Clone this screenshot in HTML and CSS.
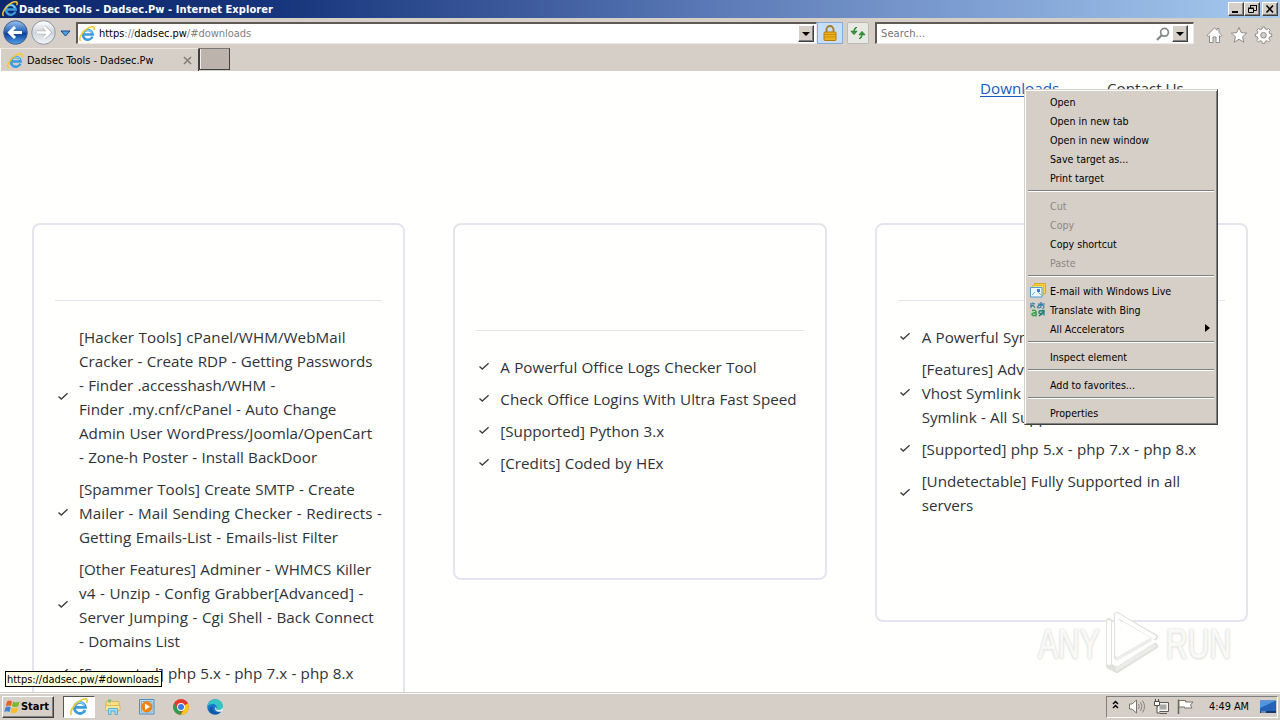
FILE: index.html
```html
<!DOCTYPE html>
<html lang="en">
<head>
<meta charset="utf-8">
<title>Dadsec Tools - Dadsec.Pw</title>
<link rel="stylesheet" href="styles.css">
</head>
<body>
<svg width="0" height="0" class="defs">
  <defs>
    <linearGradient id="blueball" x1="0" y1="0" x2="0" y2="1"><stop offset="0" stop-color="#9cc4ee"/><stop offset=".45" stop-color="#2b66bb"/><stop offset=".55" stop-color="#0f3f97"/><stop offset="1" stop-color="#4fa6ee"/></linearGradient>
    <linearGradient id="greyball" x1="0" y1="0" x2="0" y2="1"><stop offset="0" stop-color="#fff"/><stop offset=".5" stop-color="#cfd4dc"/><stop offset="1" stop-color="#f4f7fb"/></linearGradient>
    <symbol id="ie" viewBox="0 0 16 16">
      <path d="M13.400 10.600A4.900 4.900 0 1 1 13.700 8.400H5.200" fill="none" stroke="#3a9bdf" stroke-width="2.500"/>
      <path d="M13 7A5 5 0 0 0 3.600 7.500" fill="none" stroke="#8ad6fa" stroke-width="1.100"/>
      <path d="M1.600 15C-.8 13 2.500 6.500 7.500 3.200C11.500.400 15 .200 15.200 1.900C15.300 2.700 15 3.500 14.600 4.200" fill="none" stroke="#f2c933" stroke-width="1.500"/>
    </symbol>
    <symbol id="check" viewBox="0 0 12 12"><path d="M1.500 6.500L4.300 9.100L10.600 3.300" fill="none" stroke="#3c3f45" stroke-width="1.400"/></symbol>
  </defs>
</svg>
<div class="screen">
  <header class="titlebar">
    <svg class="i16"><use href="#ie"/></svg>
    <span class="title">Dadsec Tools - Dadsec.Pw - Internet Explorer</span>
    <div class="winbtns">
      <button class="wb"><svg width="12" height="10"><path d="M2 8h6" stroke="#000" stroke-width="2"/></svg></button><button class="wb"><svg width="12" height="10"><path d="M4.500 4V1.500H10.500V6.500H8M4 1.500h7M2.500 4.500h5v4h-5zM2 4h6" fill="none" stroke="#000"/></svg></button><button class="wb close"><svg width="12" height="10"><path d="M2.500 1.500L9 8.500M9 1.500L2.500 8.500" stroke="#000" stroke-width="1.600"/></svg></button>
    </div>
  </header>
  <div class="toolbar">
    <svg class="nav" width="74" height="28" viewBox="0 0 74 28">
      <circle cx="15.500" cy="13.500" r="11.800" fill="url(#blueball)" stroke="#455f8d"/>
      <path d="M22 13.500H10M15 8L9.500 13.500L15 19" fill="none" stroke="#fff" stroke-width="3"/>
      <circle cx="43.500" cy="13.500" r="11.800" fill="url(#greyball)" stroke="#9297a0"/>
      <path d="M37 13.500H49M44 8L49.500 13.500L44 19" fill="none" stroke="#b3b7bf" stroke-width="4.200"/>
      <path d="M37 13.500H49M44 8L49.500 13.500L44 19" fill="none" stroke="#fff" stroke-width="2.600"/>
      <path d="M61 12h9l-4.500 5z" fill="#4c9fe0" stroke="#174b86"/>
    </svg>
    <div class="field address">
      <svg class="i16"><use href="#ie"/></svg>
      <span class="url">https<i>://</i>dadsec.pw<i>/#downloads</i></span>
      <span class="drop"></span>
    </div>
    <div class="tool lock"><svg width="14" height="16" viewBox="0 0 14 16"><path d="M3.500 8V4.500a3.500 3.500 0 0 1 7 0V8" fill="none" stroke="#a57c20" stroke-width="1.800"/><rect x="1" y="7" width="12" height="8.500" rx="1" fill="#eeb01e" stroke="#b17a0b"/><path d="M1.500 9.500h11M1.500 12h11" stroke="#c88c0e"/></svg></div>
    <div class="tool refresh"><svg width="16" height="14" viewBox="0 0 16 14"><path d="M7 1.500C5 1 4 2.500 4 5.500M1 5.200h6l-3 3.300zM9 12.500C11 13 12 11.500 12 8.500M9 8.800h6l-3-3.300z" fill="#369c38" stroke="#27852d"/></svg></div>
    <div class="field search">
      <span class="ph">Search...</span>
      <svg class="mag" width="14" height="14" viewBox="0 0 14 14"><circle cx="8.500" cy="5.300" r="3.900" fill="none" stroke="#85878a" stroke-width="1.700"/><path d="M5.600 8.300L1 13" stroke="#85878a" stroke-width="2.200"/></svg>
      <span class="drop"></span>
    </div>
    <svg class="cmds" width="68" height="18" viewBox="0 0 68 18" fill="#fff" stroke="#8e8b87">
      <path d="M1 9.500L8.500 1.800L11 4.300V2.500h2v4L16 9.500L14.500 10.500L13.500 9.700V16.500H10V11H7V16.500H3.500V9.700L2.400 10.500Z"/>
      <path d="M33 1.500L35.200 6.600L40.700 7.100L36.600 10.700L37.800 16.200L33 13.300L28.200 16.200L29.400 10.700L25.300 7.100L30.800 6.600Z"/>
      <path d="M56.300 1h2.400l.4 2 1.700.7 1.700-1.200 1.700 1.700-1.200 1.700.7 1.700 2 .4v2.400l-2 .4-.7 1.700 1.200 1.700-1.700 1.700-1.700-1.200-1.700.7-.4 2h-2.400l-.4-2-1.700-.7-1.700 1.200-1.700-1.700 1.200-1.700-.7-1.700-2-.4V8l2-.4.7-1.700-1.200-1.700 1.700-1.700 1.700 1.200 1.700-.7Z"/><circle cx="57.500" cy="9.200" r="2.800" fill="#d6cfc8"/>
    </svg>
  </div>
  <div class="tabs">
    <div class="tab"><svg class="i16"><use href="#ie"/></svg><span>Dadsec Tools - Dadsec.Pw</span><svg class="x" width="9" height="9"><path d="M1 1L8 8M8 1L1 8" stroke="#858078" stroke-width="1.700"/></svg></div>
    <div class="newtab"></div>
  </div>

  <main class="page">
    <nav class="links"><a class="on">Downloads</a><a>Contact Us</a></nav>
    <section class="cards">
      <article class="card c1">
        <hr>
        <ul>
          <li><svg><use href="#check"/></svg><p><span class="wide">[Hacker Tools] cPanel/WHM/WebMail</span><span>Cracker - Create RDP - Getting Passwords</span><span>- Finder .accesshash/WHM -</span><span>Finder .my.cnf/cPanel - Auto Change</span><span>Admin User WordPress/Joomla/OpenCart</span><span>- Zone-h Poster - Install BackDoor</span></p></li>
          <li><svg><use href="#check"/></svg><p><span>[Spammer Tools] Create SMTP - Create</span><span class="wide">Mailer - Mail Sending Checker - Redirects -</span><span class="wide">Getting Emails-List - Emails-list Filter</span></p></li>
          <li><svg><use href="#check"/></svg><p><span>[Other Features] Adminer - WHMCS Killer</span><span class="wide">v4 - Unzip - Config Grabber[Advanced] -</span><span class="wide">Server Jumping - Cgi Shell - Back Connect</span><span>- Domains List</span></p></li>
          <li><svg><use href="#check"/></svg><p><span>[Supported] php 5.x - php 7.x - php 8.x</span></p></li>
        </ul>
      </article>
      <article class="card c2">
        <hr>
        <ul>
          <li><svg><use href="#check"/></svg><p><span>A Powerful Office Logs Checker Tool</span></p></li>
          <li><svg><use href="#check"/></svg><p><span>Check Office Logins With Ultra Fast Speed</span></p></li>
          <li><svg><use href="#check"/></svg><p><span>[Supported] Python 3.x</span></p></li>
          <li><svg><use href="#check"/></svg><p><span>[Credits] Coded by HEx</span></p></li>
        </ul>
      </article>
      <article class="card c3">
        <hr>
        <ul>
          <li><svg><use href="#check"/></svg><p><span>A Powerful Sym</span></p></li>
          <li><svg><use href="#check"/></svg><p><span>[Features] Adva</span><span>Vhost Symlink</span><span>Symlink - All Supp</span></p></li>
          <li><svg><use href="#check"/></svg><p><span>[Supported] php 5.x - php 7.x - php 8.x</span></p></li>
          <li><svg><use href="#check"/></svg><p><span>[Undetectable] Fully Supported in all</span><span>servers</span></p></li>
        </ul>
      </article>
    </section>
    <div class="watermark">
      <span class="any">ANY</span>
      <svg width="58" height="66" viewBox="0 0 58 66" fill="none">
        <g stroke="#e0e0dd" stroke-width="6" stroke-linejoin="round" stroke-linecap="round"><path d="M14 6V48L45 30M14 6L52 28M6 12V57L14 61L52 37"/></g>
        <path d="M14 10L48 29L14 49Z" fill="#fffffd"/>
        <g stroke="#fff" stroke-width="4" stroke-linejoin="round" stroke-linecap="round"><path d="M14 6V46M14 6L51 28M6 13V54"/></g>
        <g stroke="#ececea" stroke-width="3.500" stroke-linecap="round"><path d="M14 50L47 31M14 60L51 37"/></g>
      </svg>
      <span class="run">RUN</span>
    </div>
    <div class="tooltip">https://dadsec.pw/#downloads</div>
  </main>

  <footer class="taskbar">
    <button class="start"><svg width="17" height="16" viewBox="0 0 17 16"><path d="M3 2.500Q5.500.800 8 2.400L6.900 7Q4.500 5.700 1.800 7.200Z" fill="#e8602c"/><path d="M9 2.800Q12 4.300 15.500 2.500L14.300 7.200Q11 8.800 7.900 7.200Z" fill="#79b72c"/><path d="M1.600 8.200Q4.200 6.800 6.700 8.200L5.500 13Q3 11.500.300 13Z" fill="#3b83d6"/><path d="M7.700 8.500Q11 10 14.100 8.400L12.800 13.300Q9.600 15 6.500 13.300Z" fill="#f5c027"/></svg><b>Start</b></button>
    <div class="pin active"><svg class="i18"><use href="#ie"/></svg></div>
    <div class="pin"><svg width="18" height="18" viewBox="0 0 18 18"><path d="M2 3.500L7 2L8 3.500H15V9H2z" fill="#f7df86" stroke="#ddb64e"/><path d="M4 1.500h3v3H4z" fill="#7bc37a"/><path d="M1.500 7.500H16v5H1.500z" fill="#f8e69b" stroke="#dcba5d"/><path d="M4.500 16.500V10.500H13.500V16.500H11V13H7V16.500Z" fill="#a7dcf2" stroke="#5caed3"/></svg></div>
    <div class="pin"><svg width="18" height="18" viewBox="0 0 18 18"><path d="M1.500 1.500h14.500v14.500h-14.500z" fill="#b6daf1" stroke="#4c8fbf"/><path d="M3.500 3.500h10.500v10.500h-10.500z" fill="#e3f0f8" stroke="#7eb2d4"/><circle cx="8.800" cy="8.800" r="5.600" fill="#ef8312"/><path d="M7 5.600L12 8.800L7 12z" fill="#fff"/></svg></div>
    <div class="pin"><svg width="16" height="16" viewBox="0 0 16 16"><circle cx="8" cy="8" r="7.800" fill="#e33b2e"/><path d="M1.200 4.200L8 8L7.700 15.800A7.800 7.800 0 0 1 1.200 4.200" fill="#2f9e4f"/><path d="M8 8L15 4.500A7.800 7.800 0 0 1 7.700 15.800L11 10Z" fill="#fbc916"/><path d="M1.200 4.200A7.800 7.800 0 0 1 15 4.500H8L4.700 10Z" fill="#e33b2e"/><circle cx="8" cy="8" r="3.900" fill="#fff"/><circle cx="8" cy="8" r="3" fill="#3b7de8"/></svg></div>
    <div class="pin"><svg width="16" height="16" viewBox="0 0 16 16"><circle cx="8" cy="8" r="7.800" fill="#1c76c9"/><path d="M.300 7.500C1 2.500 5 .200 8.500.200C13 .200 15.800 3.500 15.800 7C15.800 9.600 14 11 11.500 11C9.500 11 8.800 10.200 9.400 9.300C10.500 7.500 9 5 6 5C3.500 5 1.200 6 .300 7.500" fill="#35c5c2"/><path d="M5.800 7.500C4.500 11 8 14.500 13.500 12.700C11 16 5 16.300 2.500 12.500C1.400 9.500 4 7.500 5.800 7.500" fill="#1257a7"/><path d="M9.400 9.300C8.800 10.200 9.500 11 11.500 11C13.500 11 15.200 10 15.700 8L16 12.300L13.500 12.700C10 13.500 7.500 11 8.200 8Z" fill="#e6edf0"/></svg></div>
    <div class="tray">
      <svg width="90" height="20" viewBox="0 0 90 20" fill="none">
        <path d="M6 7L8.500 4.500L11 7M6 11L8.500 8.500L11 11" stroke="#000" stroke-width="1.500"/>
        <path d="M22.500 7H25L29.500 3V16L25 12H22.500Z" fill="#fff" stroke="#77736d"/><path d="M31.500 7q1.500 2.500 0 5M33.500 5q3 4.500 0 9M35.500 3.500q4 6 0 12" stroke="#85817b"/>
        <path d="M50.500 5.500h11v9h-11zM53 16.500h7" fill="#f4f4f2" stroke="#5d5b58"/><path d="M52.500 7.500h7v5h-7z" fill="#aaa9a6"/><path d="M47.500 4.500h5v4h-5zM48.500 2v2M51.500 2v2M50 9v7h3" stroke="#504e4b" fill="#fff"/>
        <path d="M71.500 2.500V17" stroke="#66635e" stroke-width="1.500"/><path d="M72 3.500H78.500V5H86L83.500 8L85 11H77.500V10H72Z" fill="#fff" stroke="#77736d"/>
      </svg>
      <span class="clock">4:49 AM</span>
      <svg width="18" height="16" viewBox="0 0 18 16"><path d="M1 1.500H17V12H1z" fill="#2563b8"/><path d="M1 1.500H17L1 9z" fill="#5595dc"/><path d="M1 12H17V14H1z" fill="#17386e"/><path d="M2 13h5" stroke="#c8d9ef"/></svg>
    </div>
  </footer>

  <div class="menu">
    <div>Open</div><div>Open in new tab</div><div>Open in new window</div><div>Save target as...</div><div>Print target</div>
    <hr>
    <div class="off">Cut</div><div class="off">Copy</div><div>Copy shortcut</div><div class="off">Paste</div>
    <hr>
    <div><svg class="mi" viewBox="0 0 16 16"><path d="M4.500 1.500h11v10h-11z" fill="#f8d34b" stroke="#d9a81d"/><path d="M2.500 3.500h11v10h-11z" fill="#f9e27c" stroke="#e5b733"/><path d="M.500 5.500h11.500v9.500H.500z" fill="#eaf5fd" stroke="#4e9bd5"/><path d="M2 13l3-3M11 13L8 10" stroke="#6daee0"/><path d="M7 7h3v3H7z" fill="#3d7fd0"/></svg>E-mail with Windows Live</div>
    <div><svg class="mi" viewBox="0 0 16 16" fill="none"><path d="M1 2v4l2-2 2 3M2 2l3 1M8 3h7M11 1v5q-3 2-3.500 0q1-2.500 5-2q3 1.500 0 4" stroke="#337fa5" stroke-width="1.200"/><path d="M2 9.500q4-1 4 1.500v4.500M6 12q-4-.500-4 1.500q1 2.500 4 0" stroke="#36a34b" stroke-width="1.600"/><path d="M9 10l5-.500v5M9 10v2l3 1-3 2M14 10L9 15" stroke="#1d8077" stroke-width="1.300"/></svg>Translate with Bing</div>
    <div>All Accelerators<svg class="arr" width="5" height="8"><path d="M0 0L5 4L0 8z"/></svg></div>
    <hr>
    <div>Inspect element</div>
    <hr>
    <div>Add to favorites...</div>
    <hr>
    <div>Properties</div>
  </div>
</div>
</body>
</html>
```
FILE: styles.css
```css
* { box-sizing: border-box; }
body { margin: 0; font-family: "DejaVu Sans Condensed", "DejaVu Sans", sans-serif; font-stretch: condensed; font-size: 10.6px; color: #000; }
svg { display: block; flex: none; }
.defs { position: absolute; }
.screen { width: 1280px; height: 720px; display: flex; flex-direction: column; position: relative; overflow: hidden; background: #d6cfc8; }
.i16 { width: 16px; height: 16px; }
.i18 { width: 18px; height: 18px; }
button { font: inherit; padding: 0; border-radius: 0; }

.titlebar { height: 18px; display: flex; align-items: center; padding: 0 2px; background: linear-gradient(90deg, #0c276d 0%, #17357c 22%, #6382bd 60%, #a6caf0 100%); color: #fff; }
.title { font-weight: bold; font-size: 11px; margin-left: 1px; white-space: nowrap; letter-spacing: .08px; }
.winbtns { margin-left: auto; display: flex; }
.wb { width: 16px; height: 14px; background: #d6cfc8; border: 1px solid; border-color: #fff #404040 #404040 #fff; box-shadow: inset -1px -1px #808080; display: flex; align-items: center; justify-content: center; }
.close { margin-left: 2px; }

.toolbar { height: 30px; display: flex; align-items: center; }
.nav { margin-right: 2px; }
.field { height: 22px; background: #fff; border: 1px solid; border-color: #5f5a55 #eeebe6 #eeebe6 #5f5a55; border-top-width: 2px; border-left-width: 2px; display: flex; align-items: center; }
.address { width: 741px; padding-left: 1px; }
.url { margin-left: 4px; font-size: 11px; letter-spacing: -.03px; }
.url i { font-style: normal; color: #808080; }
.drop { width: 16px; height: 17px; margin-left: auto; background: #d6cfc8; border: 1px solid; border-color: #fff #404040 #404040 #fff; box-shadow: inset -1px -1px #808080; display: flex; align-items: center; justify-content: center; }
.drop::after { content: ""; border: 4px solid transparent; border-top-color: #000; border-bottom: 0; }
.address .drop { margin-right: 2px; }
.tool { height: 22px; display: flex; align-items: center; justify-content: center; }
.lock { width: 26px; background: #c7ddf8; border: 1px solid #84acdd; }
.refresh { width: 22px; margin-left: 4px; background: #e8e9e4; border: 1px solid #bcb9b2; border-radius: 2px; }
.search { width: 319px; margin-left: 6px; padding-left: 4px; }
.ph { color: #737373; font-size: 11px; letter-spacing: .1px; }
.mag { margin-left: auto; }
.search .drop { margin: 0 5px 0 2px; }
.cmds { margin-left: 12px; margin-top: 4px; }

.tabs { height: 23px; display: flex; }
.tab { width: 199px; padding: 1px 6px 0 6px; display: flex; align-items: center; border-left: 1px solid #fff; border-top: 1px solid #ebe8e2; border-right: 1px solid #404040; }
.tab span { margin-left: 4px; font-size: 10.9px; white-space: nowrap; }
.x { margin-left: auto; }
.newtab { width: 31px; height: 22px; border: 1px solid #404040; border-top-color: #777; background: #bbb3ac; box-shadow: inset 1px 0 #f0eeea; }

.page { flex: 1; min-height: 0; overflow: hidden; position: relative; background: #fffffd; font-family: "Open Sans", "Noto Sans", sans-serif; font-stretch: normal; font-size: 15.2px; color: #2f3238; }
.links { height: 152px; padding: 5px 95px 0 0; display: flex; justify-content: flex-end; line-height: 24px; }
.links a { width: 78px; white-space: nowrap; }
.links a + a { margin-left: 49px; }
.on { color: #185abd; text-decoration: underline; text-underline-offset: 2px; }
.cards { display: grid; grid-template-columns: repeat(3, 1fr); gap: 48px; padding: 0 32px; align-items: start; }
.card { border: 2px solid #e4e4ef; border-radius: 8px; padding: 75px 21px 0 21px; }
.c1 { height: 520px; }
.c2 { height: 357px; padding-top: 105px; }
.c3 { height: 399px; }
.card hr { margin: 0; border: 0; border-top: 1px solid #e4e5ea; }
.card ul { list-style: none; margin: 24px 0 0; padding: 0; display: flex; flex-direction: column; gap: 8px; }
.card li { display: flex; align-items: center; }
.card li svg { width: 12px; height: 12px; margin: 0 10.5px 2px 1.5px; }
.card p { margin: 0; line-height: 24px; white-space: nowrap; word-spacing: .35px; }
.card p span { display: block; }
.card p .wide { letter-spacing: .07px; word-spacing: .5px; }

.watermark { position: absolute; left: 1038px; top: 538px; display: flex; align-items: center; color: #fafaf8; font-family: "Liberation Sans", sans-serif; font-size: 43px; line-height: 68px; text-shadow: 0 0 2px #c6c6c3, 0 1px 3px #d4d4d0; -webkit-text-stroke: 1px #f6f6f4; }
.watermark span { display: block; height: 66px; transform: scaleX(.7); transform-origin: 0 0; }
.any { width: 65px; }
.run { width: 66px; margin-left: 5px; }
.tooltip { position: absolute; left: 5px; top: 600px; width: 157px; height: 16px; padding-left: 1px; border: 1px solid #000; background: #ffffe1; color: #000; font: 11px/15px "DejaVu Sans Condensed", sans-serif; font-stretch: condensed; letter-spacing: -.04px; white-space: nowrap; }

.taskbar { height: 28px; border-top: 1px solid #d6cfc8; box-shadow: inset 0 1px #fff; padding: 2px 2px 2px 2px; display: flex; align-items: center; }
.start { width: 52px; height: 22px; display: flex; align-items: center; padding-left: 1px; background: #d6cfc8; border: 1px solid; border-color: #fff #404040 #404040 #fff; box-shadow: inset -1px -1px #808080; margin-right: 9px; }
.start b { font-size: 11px; letter-spacing: -.05px; }
.pin { width: 32px; height: 22px; margin-right: 2px; display: flex; align-items: center; justify-content: center; }
.active { background: #fff; border: 1px solid; border-color: #555 #fff #fff #555; }
.tray { margin-left: auto; width: 172px; height: 22px; display: flex; align-items: center; border: 1px solid; border-color: #808080 #fff #fff #808080; }
.clock { margin-left: 12px; width: 50px; font-size: 10.8px; white-space: nowrap; }

.menu { position: absolute; left: 1024px; top: 89px; width: 194px; height: 336px; padding: 3px 1px; background: #d6cfc8; border: 1px solid; border-color: #d6cfc8 #404040 #404040 #d6cfc8; box-shadow: inset 1px 1px #fff, inset -1px -1px #808080; }
.menu div { height: 19px; line-height: 19px; padding-left: 24px; position: relative; white-space: nowrap; }
.menu hr { height: 2px; margin: 2px 2px 5px 2px; border: 0; border-top: 1px solid #808080; border-bottom: 1px solid #fff; }
.menu .off { color: #8b8781; }
.mi { position: absolute; left: 4px; top: 0; width: 16px; height: 16px; }
.arr { position: absolute; right: 6px; top: 4px; }
```
